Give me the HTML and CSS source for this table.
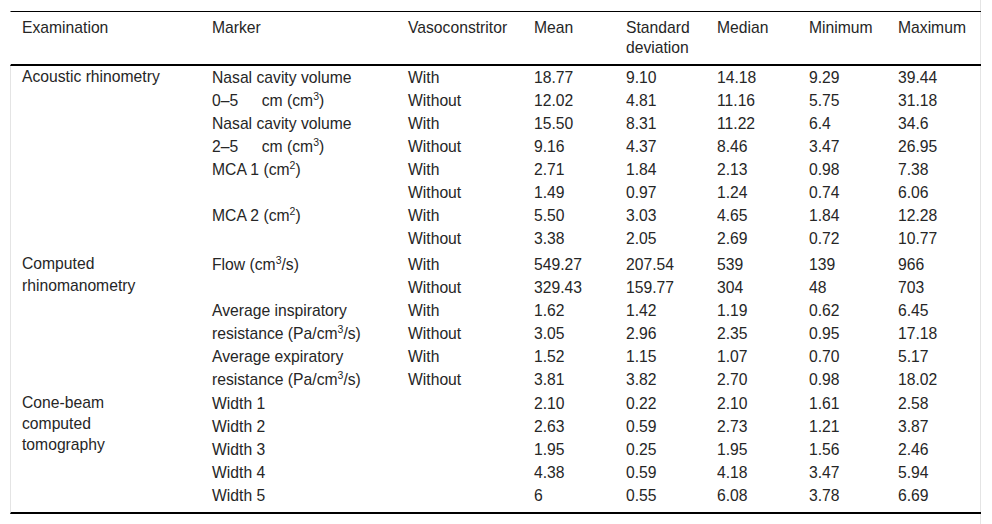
FILE: index.html
```html
<!DOCTYPE html>
<html lang="en">
<head>
<meta charset="utf-8">
<title>Table</title>
<link rel="stylesheet" href="styles.css">
</head>
<body>
<div class="wrap">
<table class="data">
<colgroup>
<col class="c1"><col class="c2"><col class="c3"><col class="c4"><col class="c5"><col class="c6"><col class="c7"><col class="c8">
</colgroup>
<thead>
<tr>
<th class="exam">Examination</th><th>Marker</th><th>Vasoconstritor</th><th>Mean</th><th>Standard deviation</th><th>Median</th><th>Minimum</th><th>Maximum</th>
</tr>
</thead>
<tbody>
<tr><td class="exam" rowspan="8">Acoustic rhinometry</td><td rowspan="2">Nasal cavity volume<br>0–5&emsp;&ensp;cm (cm<sup>3</sup>)</td><td>With</td><td>18.77</td><td>9.10</td><td>14.18</td><td>9.29</td><td>39.44</td></tr>
<tr><td>Without</td><td>12.02</td><td>4.81</td><td>11.16</td><td>5.75</td><td>31.18</td></tr>
<tr><td rowspan="2">Nasal cavity volume<br>2–5&emsp;&ensp;cm (cm<sup>3</sup>)</td><td>With</td><td>15.50</td><td>8.31</td><td>11.22</td><td>6.4</td><td>34.6</td></tr>
<tr><td>Without</td><td>9.16</td><td>4.37</td><td>8.46</td><td>3.47</td><td>26.95</td></tr>
<tr><td rowspan="2">MCA 1 (cm<sup>2</sup>)</td><td>With</td><td>2.71</td><td>1.84</td><td>2.13</td><td>0.98</td><td>7.38</td></tr>
<tr><td>Without</td><td>1.49</td><td>0.97</td><td>1.24</td><td>0.74</td><td>6.06</td></tr>
<tr><td rowspan="2">MCA 2 (cm<sup>2</sup>)</td><td>With</td><td>5.50</td><td>3.03</td><td>4.65</td><td>1.84</td><td>12.28</td></tr>
<tr><td>Without</td><td>3.38</td><td>2.05</td><td>2.69</td><td>0.72</td><td>10.77</td></tr>

<tr class="grp"><td class="exam" rowspan="6">Computed<br>rhinomanometry</td><td rowspan="2">Flow (cm<sup>3</sup>/s)</td><td>With</td><td>549.27</td><td>207.54</td><td>539</td><td>139</td><td>966</td></tr>
<tr><td>Without</td><td>329.43</td><td>159.77</td><td>304</td><td>48</td><td>703</td></tr>
<tr><td rowspan="2">Average inspiratory<br>resistance (Pa/cm<sup>3</sup>/s)</td><td>With</td><td>1.62</td><td>1.42</td><td>1.19</td><td>0.62</td><td>6.45</td></tr>
<tr><td>Without</td><td>3.05</td><td>2.96</td><td>2.35</td><td>0.95</td><td>17.18</td></tr>
<tr><td rowspan="2">Average expiratory<br>resistance (Pa/cm<sup>3</sup>/s)</td><td>With</td><td>1.52</td><td>1.15</td><td>1.07</td><td>0.70</td><td>5.17</td></tr>
<tr><td>Without</td><td>3.81</td><td>3.82</td><td>2.70</td><td>0.98</td><td>18.02</td></tr>

<tr class="grp grp-last"><td class="exam end" rowspan="5">Cone-beam<br>computed<br>tomography</td><td>Width 1</td><td></td><td>2.10</td><td>0.22</td><td>2.10</td><td>1.61</td><td>2.58</td></tr>
<tr><td>Width 2</td><td></td><td>2.63</td><td>0.59</td><td>2.73</td><td>1.21</td><td>3.87</td></tr>
<tr><td>Width 3</td><td></td><td>1.95</td><td>0.25</td><td>1.95</td><td>1.56</td><td>2.46</td></tr>
<tr><td>Width 4</td><td></td><td>4.38</td><td>0.59</td><td>4.18</td><td>3.47</td><td>5.94</td></tr>
<tr class="last"><td>Width 5</td><td></td><td>6</td><td>0.55</td><td>6.08</td><td>3.78</td><td>6.69</td></tr>
</tbody>
</table>
</div>
</body>
</html>
```
FILE: styles.css
```css
html, body {
  margin: 0;
  padding: 0;
  background: #ffffff;
}

body {
  font-family: "Liberation Sans", Arial, sans-serif;
  font-size: 15.7px;
  color: #262626;
}

.wrap {
  margin-left: 10px;
  width: 971px;
  min-height: 100vh;
  box-sizing: border-box;
  padding-top: 11px;
  border-right: 1px solid #e4e4e4;
}

.data {
  width: 971px;
  table-layout: fixed;
  border-collapse: separate;
  border-spacing: 0;
}

.c1 { width: 191px; }
.c2 { width: 196px; }
.c3 { width: 126px; }
.c4 { width: 92px; }
.c5 { width: 91px; }
.c6 { width: 92px; }
.c7 { width: 89px; }
.c8 { width: 94px; }

.data th {
  font-weight: normal;
  text-align: left;
  vertical-align: top;
  line-height: 20px;
  padding: 6px 4px 6px 11px;
  border-top: 1px solid #000;
  border-bottom: 2px solid #000;
}

.data th.exam {
  border-left: 1px solid transparent;
}

.data td {
  text-align: left;
  vertical-align: top;
  line-height: 23px;
  padding: 0 4px 0 11px;
  white-space: nowrap;
}

.data td.exam {
  border-left: 1px solid #e4e4e4;
  line-height: 21.5px;
}

.data tr.grp td {
  padding-top: 3px;
}

.data tr.grp-last td {
  padding-top: 1px;
}

.data td.exam.end {
  border-bottom: 2px solid #000;
  padding-bottom: 5px;
  line-height: 21px;
}

.data tr.last td {
  border-bottom: 2px solid #000;
  padding-bottom: 5px;
}

sup {
  font-size: 10.5px;
  line-height: 0;
  vertical-align: 6px;
}
```
